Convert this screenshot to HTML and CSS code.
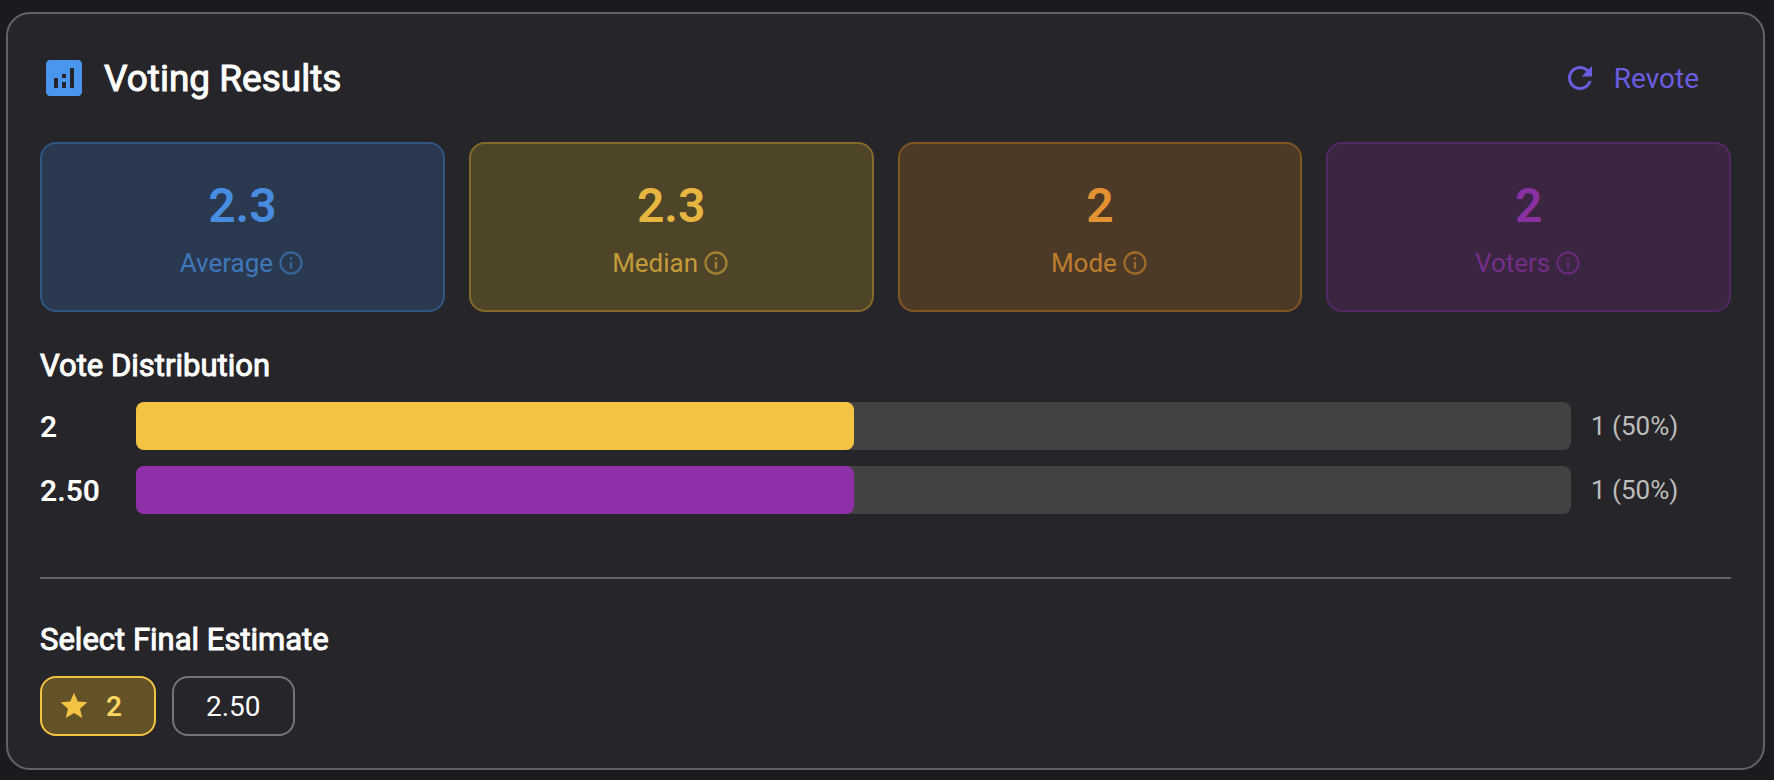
FILE: index.html
```html
<!DOCTYPE html>
<html lang="en">
<head>
    <meta charset="UTF-8">
    <meta name="viewport" content="width=device-width, initial-scale=1.0">
    <title>Voting Results</title>
    <link rel="stylesheet" href="styles.css">
</head>
<body>

<svg class="icon-defs" aria-hidden="true">
    <symbol id="icon-info" viewBox="0 0 24 24">
        <path d="M11 7h2v2h-2zm0 4h2v6h-2zm1-9C6.48 2 2 6.48 2 12s4.48 10 10 10 10-4.480 10-10S17.520 2 12 2zm0 18c-4.410 0-8-3.590-8-8s3.590-8 8-8 8 3.590 8 8-3.590 8-8 8z"/>
    </symbol>
</svg>

<main class="results-card">
    <header class="results-header">
        <svg class="header-icon" viewBox="0 0 24 24" aria-hidden="true">
            <path d="M19 3H5c-1.100 0-2 .9-2 2v14c0 1.100.9 2 2 2h14c1.100 0 2-.9 2-2V5c0-1.100-.9-2-2-2zM9 17H7v-5h2v5zm4 0h-2v-3h2v3zm0-5h-2v-2h2v2zm4 5h-2V7h2v10z"/>
        </svg>
        <h1>Voting Results</h1>
        <button type="button" class="revote-button">
            <svg class="revote-icon" viewBox="0 0 24 24" aria-hidden="true">
                <path d="M17.650 6.350C16.200 4.900 14.210 4 12 4c-4.420 0-7.990 3.580-7.990 8s3.570 8 7.990 8c3.730 0 6.840-2.550 7.730-6h-2.080c-.82 2.330-3.040 4-5.650 4-3.310 0-6-2.690-6-6s2.690-6 6-6c1.660 0 3.140.69 4.220 1.780L13 11h7V4l-2.350 2.350z"/>
            </svg>
            Revote
        </button>
    </header>

    <section class="stats">
        <div class="stat stat-average">
            <div class="stat-value">2.3</div>
            <div class="stat-label">Average <svg class="info-icon" aria-hidden="true"><use href="#icon-info"/></svg></div>
        </div>
        <div class="stat stat-median">
            <div class="stat-value">2.3</div>
            <div class="stat-label">Median <svg class="info-icon" aria-hidden="true"><use href="#icon-info"/></svg></div>
        </div>
        <div class="stat stat-mode">
            <div class="stat-value">2</div>
            <div class="stat-label">Mode <svg class="info-icon" aria-hidden="true"><use href="#icon-info"/></svg></div>
        </div>
        <div class="stat stat-voters">
            <div class="stat-value">2</div>
            <div class="stat-label">Voters <svg class="info-icon" aria-hidden="true"><use href="#icon-info"/></svg></div>
        </div>
    </section>

    <section class="distribution">
        <h2>Vote Distribution</h2>
        <div class="vote-row">
            <span class="vote-value">2</span>
            <div class="vote-track"><div class="vote-fill fill-yellow" style="width: 50%"></div></div>
            <span class="vote-count">1 (50%)</span>
        </div>
        <div class="vote-row">
            <span class="vote-value">2.50</span>
            <div class="vote-track"><div class="vote-fill fill-purple" style="width: 50%"></div></div>
            <span class="vote-count">1 (50%)</span>
        </div>
    </section>

    <section class="final-estimate">
        <h2>Select Final Estimate</h2>
        <div class="estimate-options">
            <button type="button" class="estimate selected" aria-pressed="true">
                <svg class="star-icon" viewBox="0 0 24 24" aria-hidden="true">
                    <path d="M12 17.270L18.180 21l-1.640-7.030L22 9.240l-7.190-.61L12 2 9.190 8.630 2 9.240l5.460 4.730L5.820 21z"/>
                </svg>
                2
            </button>
            <button type="button" class="estimate" aria-pressed="false">2.50</button>
        </div>
    </section>
</main>

</body>
</html>
```
FILE: styles.css
```css
* {
    box-sizing: border-box;
}

body {
    font-family: Roboto, 'Liberation Sans', sans-serif;
    background: #1b1a1e;
    color: white;
    margin: 0;
    padding: 12px 9px 10px 6px;
}

h1, h2 {
    margin: 0;
    font-weight: 400;
    -webkit-text-stroke: 1px currentColor;
}

h2 {
    font-size: 31px;
    line-height: 44px;
    margin-bottom: 14px;
}

svg {
    fill: currentColor;
    flex-shrink: 0;
}

button {
    font-family: inherit;
    font-size: 28px;
    color: inherit;
    background: none;
    border: none;
    cursor: pointer;
}

.icon-defs {
    display: none;
}

.results-card {
    background: #262529;
    border: 2px solid #636363;
    border-radius: 24px;
    padding: 32px;
}

/* Header */
.results-header {
    display: flex;
    align-items: center;
    gap: 16px;
    height: 64px;
    margin-bottom: 32px;
}

.results-header h1 {
    font-size: 37px;
    flex: 1;
}

.header-icon {
    width: 48px;
    height: 48px;
    color: #4a95ee;
}

.revote-button {
    display: flex;
    align-items: center;
    gap: 16px;
    height: 64px;
    padding: 0 32px;
    color: #6a5de0;
}

.revote-icon {
    width: 36px;
    height: 36px;
}

/* Stats */
.stats {
    display: grid;
    grid-template-columns: repeat(4, 1fr);
    gap: 24px;
    margin-bottom: 32px;
}

.stat {
    border: 2px solid;
    border-radius: 16px;
    padding: 32px;
}

.stat-value {
    font-size: 48px;
    font-weight: 600;
    line-height: 60px;
    margin-bottom: 12px;
    text-align: center;
}

.stat-label {
    display: flex;
    justify-content: center;
    align-items: center;
    gap: 4px;
    font-size: 26px;
    line-height: 30px;
}

.info-icon {
    width: 28px;
    height: 28px;
}

.stat-average {
    background: #2a394f;
    border-color: #305684;
    color: #478cde;
}

.stat-average .stat-label {
    color: #3e77ba;
}

.stat-average .info-icon {
    color: #376498;
}

.stat-median {
    background: #4e4428;
    border-color: #846a2a;
    color: #e6b640;
}

.stat-median .stat-label {
    color: #c39c39;
}

.stat-median .info-icon {
    color: #a38232;
}

.stat-mode {
    background: #4c3a26;
    border-color: #805722;
    color: #e29233;
}

.stat-mode .stat-label {
    color: #bf7d2e;
}

.stat-mode .info-icon {
    color: #a06a29;
}

.stat-voters {
    background: #3a2641;
    border-color: #542864;
    color: #8a30a2;
}

.stat-voters .stat-label {
    color: #762d8a;
}

.stat-voters .info-icon {
    color: #662a77;
}

/* Vote distribution */
.distribution {
    padding-bottom: 63px;
    border-bottom: 2px solid #636363;
    margin-bottom: 39px;
}

.vote-row {
    display: grid;
    grid-template-columns: 80px 1fr 144px;
    align-items: center;
    column-gap: 16px;
}

.vote-row + .vote-row {
    margin-top: 16px;
}

.vote-value {
    font-size: 30px;
    font-weight: 600;
}

.vote-track {
    height: 48px;
    background: #424242;
    border-radius: 8px;
}

.vote-fill {
    height: 100%;
    border-radius: 8px;
}

.fill-yellow {
    background: #f5c344;
}

.fill-purple {
    background: #9030a8;
}

.vote-count {
    font-size: 26px;
    color: #bdbdbd;
    padding-left: 4px;
}

/* Final estimate */
.estimate-options {
    display: flex;
    gap: 16px;
}

.estimate {
    display: flex;
    align-items: center;
    gap: 16px;
    height: 60px;
    padding: 0 32px;
    border: 2px solid #757575;
    border-radius: 16px;
}

.estimate.selected {
    padding-left: 16px;
    background: #625226;
    border-color: #f5c344;
    color: #fad562;
    font-weight: 600;
}

.star-icon {
    width: 32px;
    height: 32px;
    color: #f5c344;
}
```
